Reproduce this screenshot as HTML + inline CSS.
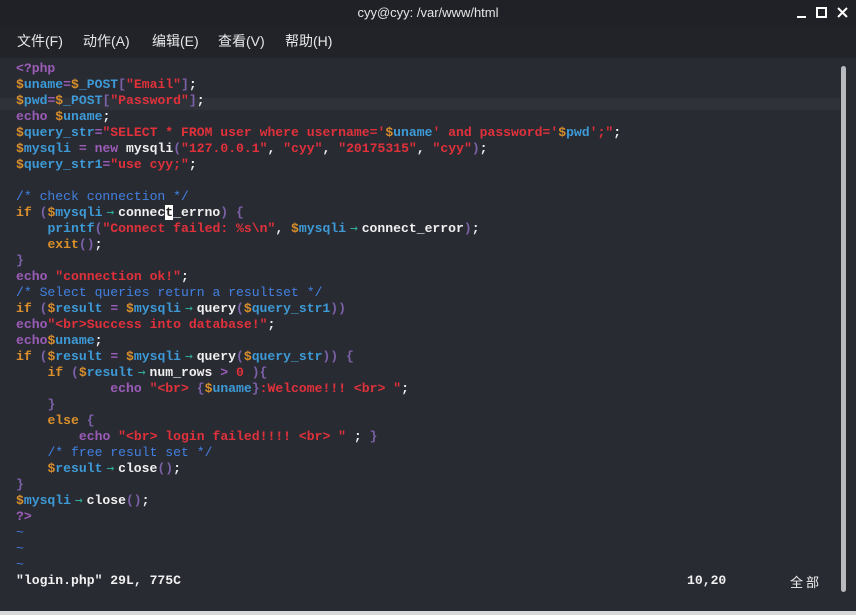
<!DOCTYPE html>
<html><head><meta charset="utf-8"><style>
body{margin:0;width:856px;height:615px;overflow:hidden;background:#292b33;position:relative;font-family:"Liberation Sans","Noto Sans CJK SC",sans-serif}
.title{position:absolute;left:0;top:0;width:856px;height:28px;background:#1f2127;color:#e6e6e6;font-size:13px;text-align:center;line-height:26px}
.menu{position:absolute;left:0;top:28px;width:856px;height:30px;background:#212329;color:#e8e8e8;font-size:14px}
.menu span{position:absolute;top:3px}
.band{position:absolute;left:0;top:98px;width:840px;height:12px;background:#30323a}
pre{position:absolute;left:16px;top:61px;margin:0;font-family:"Liberation Mono",monospace;font-size:13.1px;line-height:16px;color:#f0f0f0;font-weight:bold}
.d{color:#d98f2b}.v{color:#3d9ad6}.s{color:#e0313b}.k{color:#9b5cb8}.o{color:#d9902a}.c{color:#4280e0;font-weight:normal}.b{color:#7c60a8}.w{color:#f2f2f2}
.a{color:#2fae9a;display:inline-block;width:2ch;text-align:center;font-family:"DejaVu Sans Mono",monospace;font-weight:normal;font-size:13px;line-height:14px}
.cur{background:#fff;color:#222}
.st{position:absolute;top:573px;font-family:"Liberation Mono",monospace;font-size:13.1px;color:#f0f0f0;font-weight:bold}
.sb{position:absolute;left:841px;top:66px;width:5px;height:526px;background:#b8bac0;border-radius:3px}
.bot{position:absolute;left:0;top:611px;width:856px;height:4px;background:#d8d8d8}
</style></head><body>
<div class="title">cyy@cyy: /var/www/html
<svg style="position:absolute;left:796px;top:6px" width="52" height="14"><rect x="1" y="10" width="9" height="2" fill="#fff"/><rect x="21" y="2" width="9" height="9" fill="none" stroke="#fff" stroke-width="2"/><path d="M42 2l9 9M51 2l-9 9" stroke="#fff" stroke-width="2"/></svg></div>
<div class="menu"><span style="left:17px">文件(F)</span><span style="left:83px">动作(A)</span><span style="left:152px">编辑(E)</span><span style="left:218px">查看(V)</span><span style="left:285px">帮助(H)</span></div>
<div class="band"></div>
<pre><span class="k">&lt;?php</span>
<span class="d">$</span><span class="v">uname</span><span class="k">=</span><span class="d">$</span><span class="v">_POST</span><span class="b">[</span><span class="s">"Email"</span><span class="b">]</span>;
<span class="d">$</span><span class="v">pwd</span><span class="k">=</span><span class="d">$</span><span class="v">_POST</span><span class="b">[</span><span class="s">"Password"</span><span class="b">]</span>;
<span class="k">echo</span> <span class="d">$</span><span class="v">uname</span>;
<span class="d">$</span><span class="v">query_str</span><span class="k">=</span><span class="s">"SELECT * FROM user where username='</span><span class="d">$</span><span class="v">uname</span><span class="s">' and password='</span><span class="d">$</span><span class="v">pwd</span><span class="s">';"</span>;
<span class="d">$</span><span class="v">mysqli</span> <span class="k">=</span> <span class="k">new</span> mysqli<span class="b">(</span><span class="s">"127.0.0.1"</span>, <span class="s">"cyy"</span>, <span class="s">"20175315"</span>, <span class="s">"cyy"</span><span class="b">)</span>;
<span class="d">$</span><span class="v">query_str1</span><span class="k">=</span><span class="s">"use cyy;"</span>;

<span class="c">/* check connection */</span>
<span class="o">if</span> <span class="b">(</span><span class="d">$</span><span class="v">mysqli</span><span class="a">→</span>connec<span class="cur">t</span>_errno<span class="b">)</span> <span class="b">{</span>
    <span class="v">printf</span><span class="b">(</span><span class="s">"Connect failed: %s\n"</span>, <span class="d">$</span><span class="v">mysqli</span><span class="a">→</span>connect_error<span class="b">)</span>;
    <span class="o">exit</span><span class="b">()</span>;
<span class="b">}</span>
<span class="k">echo</span> <span class="s">"connection ok!"</span>;
<span class="c">/* Select queries return a resultset */</span>
<span class="o">if</span> <span class="b">(</span><span class="d">$</span><span class="v">result</span> <span class="k">=</span> <span class="d">$</span><span class="v">mysqli</span><span class="a">→</span>query<span class="b">(</span><span class="d">$</span><span class="v">query_str1</span><span class="b">))</span>
<span class="k">echo</span><span class="s">"&lt;br&gt;Success into database!"</span>;
<span class="k">echo</span><span class="d">$</span><span class="v">uname</span>;
<span class="o">if</span> <span class="b">(</span><span class="d">$</span><span class="v">result</span> <span class="k">=</span> <span class="d">$</span><span class="v">mysqli</span><span class="a">→</span>query<span class="b">(</span><span class="d">$</span><span class="v">query_str</span><span class="b">))</span> <span class="b">{</span>
    <span class="o">if</span> <span class="b">(</span><span class="d">$</span><span class="v">result</span><span class="a">→</span>num_rows <span class="k">&gt;</span> <span class="s">0</span> <span class="b">){</span>
            <span class="k">echo</span> <span class="s">"&lt;br&gt; </span><span class="b">{</span><span class="d">$</span><span class="v">uname</span><span class="b">}</span><span class="s">:Welcome!!! &lt;br&gt; "</span>;
    <span class="b">}</span>
    <span class="o">else</span> <span class="b">{</span>
        <span class="k">echo</span> <span class="s">"&lt;br&gt; login failed!!!! &lt;br&gt; "</span> ; <span class="b">}</span>
    <span class="c">/* free result set */</span>
    <span class="d">$</span><span class="v">result</span><span class="a">→</span>close<span class="b">()</span>;
<span class="b">}</span>
<span class="d">$</span><span class="v">mysqli</span><span class="a">→</span>close<span class="b">()</span>;
<span class="k">?&gt;</span>
<span class="c">~</span>
<span class="c">~</span>
<span class="c">~</span>
"login.php" 29L, 775C</pre>
<div class="st" style="left:687px">10,20</div>
<div class="st" style="left:790px;font-family:'Noto Sans CJK SC',sans-serif;font-weight:normal;top:572px">全 部</div>
<div class="sb"></div>
<div class="bot"></div>
</body></html>
